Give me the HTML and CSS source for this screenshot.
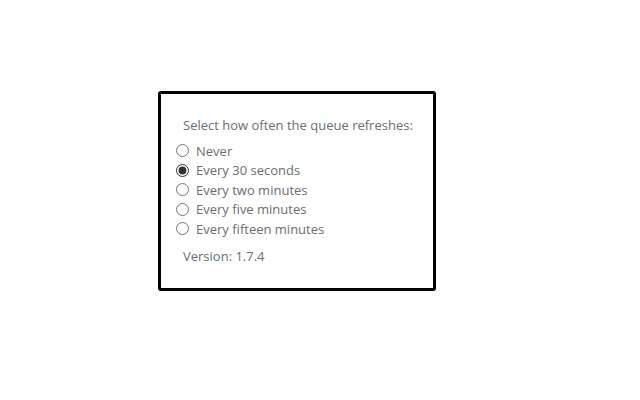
FILE: index.html
```html
<!DOCTYPE html>
<html>
<head>
<meta charset="utf-8">
<link rel="stylesheet" href="styles.css">
</head>
<body>
<div class="panel">
  <p class="prompt">Select how often the queue refreshes:</p>
  <div class="options">
    <label class="opt"><input type="radio" name="r"> <span>Never</span></label>
    <label class="opt"><input type="radio" name="r" checked> <span>Every 30 seconds</span></label>
    <label class="opt"><input type="radio" name="r"> <span>Every two minutes</span></label>
    <label class="opt"><input type="radio" name="r"> <span>Every five minutes</span></label>
    <label class="opt"><input type="radio" name="r"> <span>Every fifteen minutes</span></label>
  </div>
  <p class="version">Version: 1.7.4</p>
</div>
</body>
</html>
```
FILE: styles.css
```css
html, body { margin: 0; padding: 0; background: #fff; }
body { font-family: "Open Sans", "Noto Sans", sans-serif; font-size: 13px; color: #6b6d70; }
.panel {
  margin: 91px 0 0 158px;
  width: 278px;
  height: 200px;
  box-sizing: border-box;
  border: 3px solid #000;
  border-radius: 3px;
  padding: 22px 0 0 15px;
}
.prompt { margin: 0 0 7px 7px; line-height: 18px; }
.options { display: flex; flex-direction: column; }
.opt { display: flex; align-items: center; height: 19.5px; gap: 7px; }
.opt input { margin: 0; width: 13px; height: 13px; accent-color: #333; }
.version { margin: 8px 0 0 7px; line-height: 18px; }
```
